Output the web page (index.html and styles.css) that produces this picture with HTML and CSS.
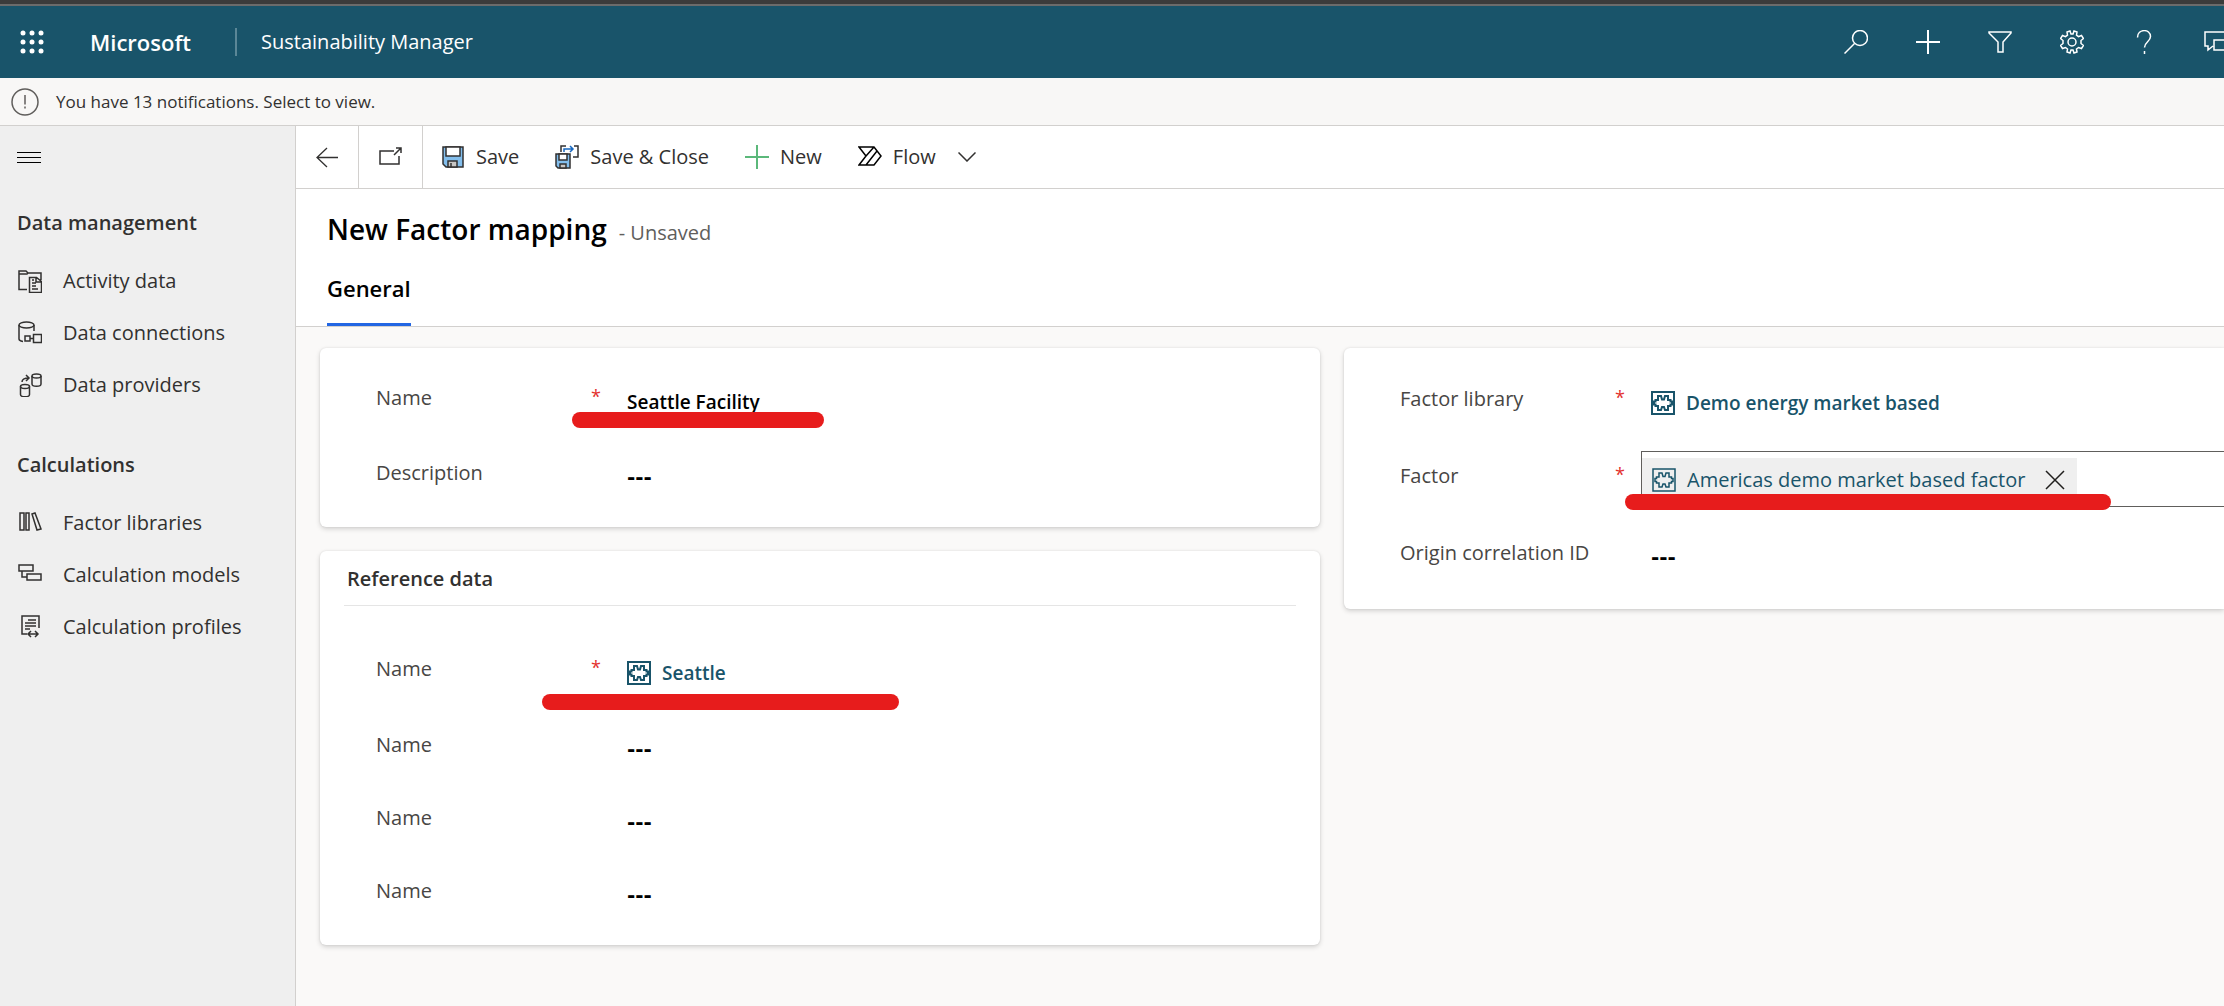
FILE: index.html
```html
<!DOCTYPE html>
<html lang="en">
<head>
<meta charset="utf-8">
<title>New Factor mapping - Sustainability Manager</title>
<meta name="viewport" content="width=device-width, initial-scale=1">
<link rel="stylesheet" href="styles.css">
</head>
<body>
<svg class="sprite" aria-hidden="true">
  <symbol id="entity" viewBox="0 0 24 24">
    <path d="M1 1h22v22H1z"/>
    <path d="M7 5h3l1 3.500h2L14 5h3v4h2.500v1.500h1.500v3h-1.500V15H17v4h-3l-1-3h-2l-1 3H7v-4H4.500v-1.500H3v-3h1.500V9H7z"/>
  </symbol>
</svg>

<header class="topbar">
  <button class="waffle" aria-label="App launcher">
    <svg class="icon" viewBox="0 0 24 24"><g fill="currentColor" stroke="none"><circle cx="3" cy="3" r="2.5"/><circle cx="12" cy="3" r="2.5"/><circle cx="21" cy="3" r="2.5"/><circle cx="3" cy="12" r="2.5"/><circle cx="12" cy="12" r="2.5"/><circle cx="21" cy="12" r="2.5"/><circle cx="3" cy="21" r="2.5"/><circle cx="12" cy="21" r="2.5"/><circle cx="21" cy="21" r="2.5"/></g></svg>
  </button>
  <a class="brand" href="#">Microsoft</a>
  <a class="app-name" href="#">Sustainability Manager</a>
  <nav class="topbar-actions" aria-label="Global actions">
    <button aria-label="Search"><svg class="icon" viewBox="0 0 24 24"><circle cx="16" cy="8" r="7.5"/><path d="M10.500 13.500 0.500 23.500"/></svg></button>
    <button aria-label="Quick create"><svg class="icon" viewBox="0 0 24 24"><path d="M12 0v24M0 12h24" stroke-width="2"/></svg></button>
    <button aria-label="Filter"><svg class="icon" viewBox="0 0 24 24"><path d="M1 2h22v1l-8 9v10H10v-10L1 3z"/></svg></button>
    <button aria-label="Settings"><svg class="icon" viewBox="0 0 24 24"><path d="M10 1 11 4h2l1-3 3 1-.5 3.200 2 1.500 3-1.200 2 3-2.500 2v3l2.500 2-2 3-3-1-2 1.500.5 3-3 1-1-3h-2l-1 3-3-1 .5-3-2-1.500-3 1-2-3L3 13.500v-3L.5 8.500l2-3 3 1.200 2-1.500L7 2z"/><circle cx="12" cy="12" r="4"/></svg></button>
    <button aria-label="Help"><svg class="icon" viewBox="0 0 24 24"><path d="M5.500 7.500C5.500-1.500 18.500-1.500 18.500 6.500c0 5-6 5.500-6 11M12.500 21v3"/></svg></button>
    <button aria-label="Assistant"><svg class="icon" viewBox="0 0 24 24"><path d="M9 16 4 20v-4H1V2h22v8M10 10h18v10h-3v3l-5-3H10z"/></svg></button>
  </nav>
</header>

<a class="notice" href="#">
  <svg class="notice-icon" viewBox="0 0 28 28"><circle cx="14" cy="14" r="13"/><path d="M14 7v9.500M14 18.500v2"/></svg>
  <span>You have 13 notifications. Select to view.</span>
</a>

<div class="shell">
  <aside class="sidebar">
    <button class="menu-toggle" aria-label="Toggle navigation"><svg class="icon" viewBox="0 0 24 24"><path d="M0 6.500h24M0 11.500h24M0 16.500h24" stroke="#000" stroke-width="1"/></svg></button>
    <nav aria-label="Site map">
      <h2>Data management</h2>
      <ul>
        <li><a href="#"><svg class="icon" viewBox="0 0 24 24"><path d="M9 20.500H1V2h7l2 2h13v7M1 5h8l1-1M11.500 8.500h7l5 4v11h-12zM18 9v4h5M14 11h2M14 14h4M14 17h4M14 20h6"/></svg>Activity data</a></li>
        <li><a href="#"><svg class="icon" viewBox="0 0 24 24"><ellipse cx="8.500" cy="4" rx="7.500" ry="3"/><path d="M1 4v14c0 1 1 2 4 2.500M16 4v6M7 15h5v5H7zM12 17.500h4M15.500 13.500h8v8h-8z"/></svg>Data connections</a></li>
        <li><a href="#"><svg class="icon" viewBox="0 0 24 24"><ellipse cx="18.500" cy="3" rx="4.500" ry="2"/><path d="M14 3v8c0 3 9 3 9 0V3"/><ellipse cx="7" cy="13.500" rx="4.500" ry="2"/><path d="M2.500 13.500v8c0 3 9 3 9 0v-8M4 9c0-3 2-4 7-4M8 2l3 3-3 3"/></svg>Data providers</a></li>
      </ul>
      <h2>Calculations</h2>
      <ul>
        <li><a href="#"><svg class="icon" viewBox="0 0 24 24"><path d="M2 2h4v17H2zM8 2h3v17H8zM14 3l3-1 6 16-4 1z"/></svg>Factor libraries</a></li>
        <li><a href="#"><svg class="icon" viewBox="0 0 24 24"><path d="M1 2h14v6H1zM4 8v6h5M9 11h14v6H9z"/></svg>Calculation models</a></li>
        <li><a href="#"><svg class="icon" viewBox="0 0 24 24"><path d="M9 19H4V1h17v12M10 5h8M7 8h11M7 11h11M7 14h5M10 19h10M13 16l-3 3 3 3M17 16l3 3-3 3"/></svg>Calculation profiles</a></li>
      </ul>
    </nav>
  </aside>

  <main class="main">
    <div class="commands" role="toolbar" aria-label="Commands">
      <button class="square" aria-label="Back"><svg class="icon" viewBox="0 0 24 24"><path d="M23 12.500H2M12 3 2 12.500l10 9.500" stroke-width="1.3"/></svg></button>
      <button class="square" aria-label="Open in new window"><svg class="icon" viewBox="0 0 24 24"><path d="M15 6H1v13h19v-8M15 10l7-7M17 3h5v5"/></svg></button>
      <button class="command save"><svg class="icon" viewBox="0 0 24 24"><path d="M2 2h20v20H5l-3-3z" fill="#83beec"/><path d="M5 2h14v9H5z" fill="#fff"/><path d="M7 22v-6h9v6z" fill="#c8c6c4"/><path d="M10 18v4"/></svg>Save</button>
      <button class="command"><svg class="icon" viewBox="0 0 24 24"><path d="M1 9h14v14H3l-2-2z" fill="#83beec"/><path d="M4 9h8v6H4z" fill="#fff"/><path d="M5 23v-4h6v4z" fill="#c8c6c4"/><path d="M6 7V1h5M19 1h4v11h-5"/><path d="M9 7V4h9M15 1l3 3-3 3" stroke="#1868c0"/></svg>Save &amp; Close</button>
      <button class="command"><svg class="icon" viewBox="0 0 24 24"><path d="M12 0v24M0 12h24" stroke="#5bb87a" stroke-width="2"/></svg>New</button>
      <button class="command"><svg class="icon flow" viewBox="0 0 24 24"><path d="M1 2h15l7 9-7 9H1l7-9zM8 11l8-9M8 20 19 6"/></svg>Flow<svg class="chevron" viewBox="0 0 18 10"><path d="M0.500 0.500 9 9l8.500-8.500"/></svg></button>
    </div>

    <div class="record-head">
      <div class="title-row"><h1>New Factor mapping</h1><span>- Unsaved</span></div>
      <div role="tablist"><button class="tab" role="tab" aria-selected="true">General</button></div>
    </div>

    <form class="form">
      <div class="column">
        <section class="card">
          <div class="field">
            <label for="name">Name</label><span class="required">*</span>
            <div class="value"><input id="name" type="text" value="Seattle Facility"></div>
            <i class="mark mark-name"></i>
          </div>
          <div class="field">
            <label for="description">Description</label>
            <div class="value"><input class="empty" id="description" type="text" value="---"></div>
          </div>
        </section>
        <section class="card reference">
          <h2>Reference data</h2>
          <div class="field required-field">
            <span class="label">Name</span><span class="required">*</span>
            <div class="value"><a href="#"><svg class="icon entity"><use href="#entity"/></svg>Seattle</a></div>
            <i class="mark mark-reference"></i>
          </div>
          <div class="field">
            <label for="name2">Name</label>
            <div class="value"><input class="empty" id="name2" type="text" value="---"></div>
          </div>
          <div class="field">
            <label for="name3">Name</label>
            <div class="value"><input class="empty" id="name3" type="text" value="---"></div>
          </div>
          <div class="field">
            <label for="name4">Name</label>
            <div class="value"><input class="empty" id="name4" type="text" value="---"></div>
          </div>
        </section>
      </div>
      <div class="column">
        <section class="card bleed">
          <div class="field">
            <span class="label">Factor library</span><span class="required">*</span>
            <div class="value"><a href="#"><svg class="icon entity"><use href="#entity"/></svg>Demo energy market based</a></div>
          </div>
          <div class="field">
            <span class="label">Factor</span><span class="required">*</span>
            <div class="lookup">
              <div class="tag">
                <a href="#"><svg class="icon"><use href="#entity"/></svg>Americas demo market based factor</a>
                <button type="button" aria-label="Remove"><svg viewBox="0 0 20 20"><path d="M1 1l18 18M19 1 1 19"/></svg></button>
              </div>
            </div>
            <i class="mark mark-factor"></i>
          </div>
          <div class="field">
            <label for="origin">Origin correlation ID</label>
            <div class="value"><input class="empty" id="origin" type="text" value="---"></div>
          </div>
        </section>
      </div>
    </form>
  </main>
</div>
</body>
</html>
```
FILE: styles.css
```css
* { box-sizing: border-box; }

body {
  margin: 0;
  min-height: 100vh;
  display: flex;
  flex-direction: column;
  overflow-x: hidden;
  background: #faf9f8;
  color: #323130;
  font: 20px/28px "Open Sans", "Noto Sans", sans-serif;
}

h1, h2, ul { margin: 0; padding: 0; }
ul { list-style: none; }
a { color: inherit; text-decoration: none; }

button {
  padding: 0;
  border: 0;
  background: none;
  color: inherit;
  font: inherit;
  cursor: pointer;
}

svg { display: block; flex: none; fill: none; stroke: currentColor; stroke-width: 1.5; }
.icon { width: 24px; height: 24px; }
.sprite { position: absolute; width: 0; height: 0; }

/* Top bar */
.topbar {
  display: flex;
  align-items: center;
  height: 78px;
  padding-top: 2px;
  border-top: 4px solid #3b3b3b;
  box-shadow: inset 0 2px #6b6b6b;
  background: #19546a;
  color: #fff;
  overflow: hidden;
}
.waffle { margin-left: 20px; }
.brand {
  margin-left: 46px;
  padding-right: 44px;
  border-right: 2px solid #5b8797;
  font-size: 22px;
  font-weight: 600;
}
.app-name { margin-left: 24px; }
.topbar-actions { display: flex; margin-left: auto; margin-right: -28px; }
.topbar-actions button { display: flex; justify-content: center; width: 72px; }

.notice {
  display: flex;
  align-items: center;
  gap: 17px;
  height: 48px;
  padding-left: 11px;
  border-bottom: 1px solid #d2d0ce;
  background: #f8f7f6;
  font-size: 17px;
}
.notice-icon { width: 28px; height: 28px; color: #605e5c; }

/* Navigation */
.shell { display: flex; flex: 1; }
.sidebar {
  flex: none;
  width: 296px;
  border-right: 1px solid #d2d0ce;
  background: #efefef;
  padding: 20px 0 0 17px;
}
.sidebar h2 { padding: 32px 0 18px; font-size: 20px; line-height: 28px; font-weight: 600; }
.sidebar ul + h2 { padding-top: 40px; }
.sidebar li a { display: flex; align-items: center; gap: 21px; height: 52px; margin-left: 1px; }

.main { flex: 1; min-width: 0; display: flex; flex-direction: column; }

.commands {
  display: flex;
  height: 63px;
  border-bottom: 1px solid #d2d0ce;
  background: #fff;
}
.commands button { display: flex; align-items: center; }
.square { justify-content: center; width: 63px; border-right: 1px solid #d2d0ce; }
.square + .square { width: 64px; }
.command { gap: 11px; margin-left: 36px; }
.save { margin-left: 18px; }
.flow { color: #000; }
.chevron { width: 18px; height: 10px; margin-left: 11px; }

.record-head {
  height: 138px;
  padding: 19px 0 0 31px;
  border-bottom: 1px solid #d2d0ce;
  background: #fff;
  color: #000;
}
.title-row { display: flex; align-items: baseline; gap: 12px; height: 57px; }
.title-row h1 { font-size: 28px; line-height: 42px; font-weight: 600; }
.title-row span { color: #605e5c; }
.tab { height: 61px; padding-bottom: 12px; border-bottom: 3px solid #2266e3; font-size: 22px; font-weight: 600; }

/* Form */
.form {
  flex: 1;
  display: grid;
  grid-template-columns: 25fr 22fr;
  gap: 24px;
  padding: 21px 0 60px 24px;
}
.column { display: flex; flex-direction: column; gap: 24px; min-width: 0; }
.card {
  padding: 36px 24px 28px 56px;
  border-radius: 6px;
  background: #fff;
  box-shadow: 0 2px 5px rgba(0, 0, 0, .16), 0 0 2px rgba(0, 0, 0, .1);
}
.bleed { padding: 37px 0 30px 56px; border-radius: 6px 0 0 6px; }

.field { position: relative; display: flex; height: 75px; color: #484644; }
.bleed .field { height: 77px; }
.card .field:last-of-type { height: 40px; }
.field label, .field .label { flex: none; width: 215px; white-space: nowrap; }
.required { width: 25px; margin-right: -25px; color: #e3312d; font-size: 18px; line-height: 24px; }
.value { flex: 1; padding: 4px 0 0 36px; }
.value input {
  display: block;
  width: 100%;
  height: 28px;
  padding: 0;
  border: 0;
  background: none;
  color: #000;
  font: inherit;
  font-size: 19px;
  font-weight: 600;
}
.value .empty { font-family: "DejaVu Sans", sans-serif; font-size: 20px; font-weight: 700; }
.value a, .tag a { display: flex; align-items: center; gap: 11px; color: #19546a; }
.value a { font-size: 19px; font-weight: 600; }
.entity { stroke-width: 2; }

.reference { padding-top: 14px; }
.reference h2 {
  margin: 0 0 49px -32px;
  padding: 0 3px 12px;
  border-bottom: 1px solid #e5e5e5;
  font-size: 20px;
  line-height: 28px;
  font-weight: 600;
}
.reference .field { height: 73px; }
.reference .required-field { height: 76px; }

.lookup {
  flex: 1;
  display: flex;
  height: 56px;
  margin: -11px 0 0 26px;
  padding-top: 6px;
  border: 1px solid #605e5c;
  border-right: 0;
}
.tag { display: flex; align-items: center; gap: 20px; height: 44px; padding: 0 12px 0 10px; background: #efefef; }
.tag button svg { width: 20px; height: 20px; color: #201f1e; }

/* Highlighter strokes drawn over the fields */
.mark { position: absolute; height: 16px; border-radius: 8px; background: #e71c1c; }
.mark-name { left: 196px; top: 28px; width: 252px; }
.mark-reference { left: 166px; top: 39px; width: 357px; }
.mark-factor { left: 225px; top: 32px; width: 486px; }
```
